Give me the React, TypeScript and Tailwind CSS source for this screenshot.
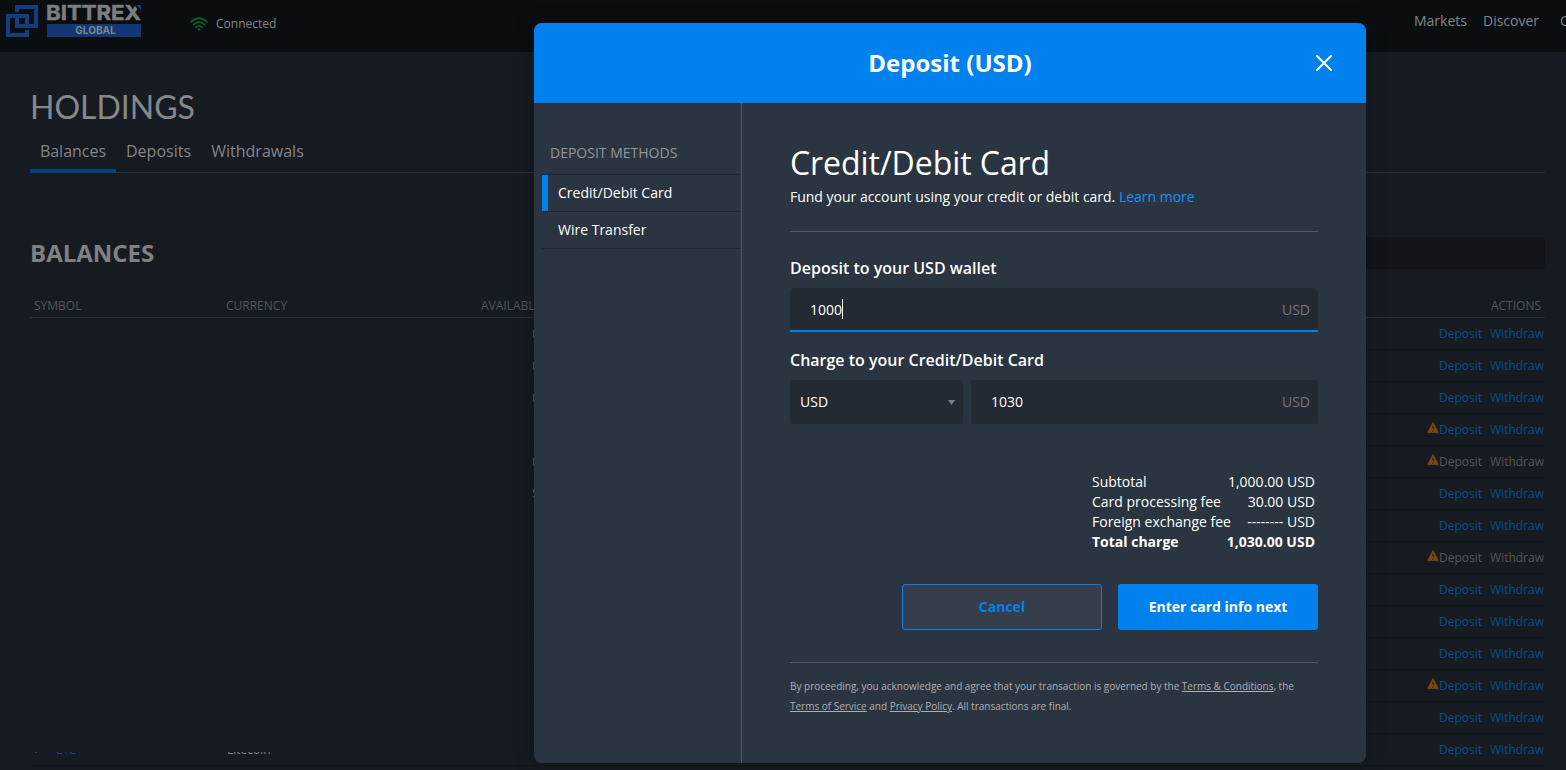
import React from 'react';

type BalanceRow = {
  symbol: string;
  currency: string;
  available: string;
  warning?: boolean;
  disabled?: boolean;
};

const rows: BalanceRow[] = [
  { symbol: '', currency: '', available: '0.00' },
  { symbol: '', currency: '', available: '0.00' },
  { symbol: '', currency: '', available: '0.00' },
  { symbol: '', currency: '', available: '', warning: true },
  { symbol: '', currency: '', available: '0.00', warning: true, disabled: true },
  { symbol: '', currency: '', available: '$0.00' },
  { symbol: '', currency: '', available: '' },
  { symbol: '', currency: '', available: '', warning: true, disabled: true },
  { symbol: '', currency: '', available: '' },
  { symbol: '', currency: '', available: '' },
  { symbol: '', currency: '', available: '' },
  { symbol: '', currency: '', available: '', warning: true },
  { symbol: '', currency: '', available: '' },
  { symbol: 'LTC', currency: 'Litecoin', available: '' },
];

const charges = [
  { label: 'Subtotal', value: '1,000.00 USD' },
  { label: 'Card processing fee', value: '30.00 USD' },
  { label: 'Foreign exchange fee', value: '-------- USD' },
];

const Logo: React.FC = () => (
  <div className="flex gap-[9px]">
    <svg width="32" height="32" viewBox="0 0 32 32" className="mt-[5px]" fill="none" stroke="#123d80" strokeWidth="4">
      <path d="M11 7V2H30V21H11V9" />
      <path d="M21 25V30H2V11H21V23" />
      <path d="M18 30H23" />
    </svg>
    <div className="w-[94px] pt-[5px]">
      <svg width="94" height="15" viewBox="0 0 94 15" className="block overflow-visible">
        <text x="-1" y="14.8" fill="#7d7e7f" stroke="#7d7e7f" strokeWidth="0.5" fontSize="20.5" fontWeight="700" fontFamily="Inter, sans-serif" textLength="95" lengthAdjust="spacingAndGlyphs">BITTREX</text>
        <path d="M87-1H95V7H92Z" fill="#0a0e11" />
        <path d="M89 0H94V5Z" fill="#123d80" />
      </svg>
      <div className="mt-1 h-[13px] bg-[#113775] pl-[3px] text-center font-[Inter,sans-serif] text-[10px] leading-[13px] font-bold text-[#808588]">GLOBAL</div>
    </div>
  </div>
);

const WifiIcon: React.FC = () => (
  <svg width="18" height="14" viewBox="0 0 18 14" fill="none" stroke="#07602f" strokeWidth="1.7" strokeLinecap="round">
    <path d="M1 5Q9-2.8 17 5M3.5 7.7Q9 2.6 14.5 7.7M6 10.2Q9 7.6 12 10.2" />
    <circle cx="9" cy="12.2" r="1.2" fill="#07602f" stroke="none" />
  </svg>
);

const WarningIcon: React.FC = () => (
  <svg width="12" height="11" viewBox="0 0 12 11" className="-mt-1">
    <path d="M6 .7 11.3 10.3H.7Z" fill="#7b4712" stroke="#7b4712" strokeLinejoin="round" />
    <path d="M6 3.7V7M6 8.2V9.4" stroke="#272017" strokeWidth="1.2" />
  </svg>
);

const Header: React.FC = () => (
  <header className="flex h-[52px] bg-[#0a0e11] pl-1.5 text-[#828587]">
    <Logo />
    <div className="ml-[49px] flex h-[47px] items-center gap-2 text-[12px]">
      <WifiIcon />
      <span>Connected</span>
    </div>
    <nav className="ml-auto flex h-[41px] w-[152px] shrink-0 items-center gap-4 overflow-hidden text-[14px] whitespace-nowrap">
      <span>Markets</span>
      <span>Discover</span>
      <span className="ml-[5px]">Orders</span>
    </nav>
  </header>
);

const Holdings: React.FC = () => (
  <main className="relative pr-[21px] pl-[30px]">
    <h1 className="pt-[34px] font-[Lato,sans-serif] text-[32px] leading-[42px] text-[#868889]">HOLDINGS</h1>
    <div className="mt-[5px] flex h-10 border-b border-[#2a2f36] text-[16px] leading-[36px] text-[#828587]">
      <div className="h-10 w-[86px] border-b-4 border-[#03427b] text-center">Balances</div>
      <div className="w-[85px] text-center">Deposits</div>
      <div className="w-[113px] text-center">Withdrawals</div>
    </div>

    <div className="mt-16 flex h-8 items-center justify-between">
      <h2 className="text-[24px] font-bold text-[#7f8081]">BALANCES</h2>
      <div className="h-8 w-[300px] rounded-sm bg-[#111519]" />
    </div>

    <div className="mt-6 flex h-[25px] items-center border-b border-[#2a2e34] pt-px text-[12px] text-[#52565a]">
      <div className="w-[196px] pl-1">SYMBOL</div>
      <div className="w-[255px]">CURRENCY</div>
      <div>AVAILABLE</div>
      <div className="ml-auto pr-1">ACTIONS</div>
    </div>
    {rows.map((row, i) => (
      <div key={i} className="flex h-8 items-center border-b border-[#111519] text-[12px] text-[#828587]">
        <div className="w-[197px] pl-[26px] text-[#0b4c8c]">{row.symbol}</div>
        <div className="w-[305px]">{row.currency}</div>
        <div className="text-[#716456]">{row.available}</div>
        <div className={`ml-auto flex items-center pr-px ${row.disabled ? 'text-[#54575b]' : 'text-[#0b4c8c]'}`}>
          {row.warning && <WarningIcon />}
          <span className="mr-2">Deposit</span>
          <span>Withdraw</span>
        </div>
      </div>
    ))}
    {/* hidden balances */}
    <div className="absolute top-[268px] left-0 h-[432px] w-[533px] bg-[#161b22]" />
    <div className="absolute top-[700px] left-[35px] h-px w-0.5 bg-[#3f4347]" />
  </main>
);

const DepositModal: React.FC = () => (
  <div className="absolute top-[23px] left-[534px] h-[740px] w-[832px] overflow-hidden rounded-lg bg-[#2b3541] text-[14px] text-white shadow-[0_2px_20px_rgba(0,0,0,0.25)]">
    <div className="flex h-20 items-center bg-[#0081ee]">
      <div className="w-[832px] text-center text-[24px] font-bold">Deposit (USD)</div>
      <svg width="16" height="16" viewBox="0 0 16 16" className="mr-[34px] -ml-[50px] shrink-0" stroke="#fff" strokeWidth="2" strokeLinecap="round">
        <path d="M1 1 15 15M15 1 1 15" />
      </svg>
    </div>
    <div className="flex h-[660px]">
      <aside className="w-52 shrink-0 border-r border-[#515963] pt-10 pl-2">
        <div className="h-[31px] pl-2 leading-5 text-[#92969b]">DEPOSIT METHODS</div>
        <div className="h-[37px] border-t border-[#202731]">
          <div className="h-9 border-l-6 border-[#0081ee] pl-2.5 leading-9">Credit/Debit Card</div>
        </div>
        <div className="h-[38px] border-y border-[#202731] pl-4 leading-9">Wire Transfer</div>
      </aside>

      <section className="w-[624px] px-12 pt-10">
        <h2 className="text-[32px] leading-10 tracking-[-0.06px]">Credit/Debit Card</h2>
        <p className="mt-1 leading-5 tracking-[-0.01px]">
          Fund your account using your credit or debit card. <a className="text-[#1691fa]">Learn more</a>
        </p>
        <div className="mt-6 border-t border-[#515963]" />

        <label className="mt-6 block text-[16px] leading-6 font-semibold">Deposit to your USD wallet</label>
        <div className="mt-2 flex h-11 items-center rounded-t-sm border-b-2 border-[#0081ee] bg-[#242a34] pr-2 pl-5">
          <span>1000</span>
          <span className="h-5 w-px bg-white" />
          <span className="ml-auto text-[#72767c]">USD</span>
        </div>

        <label className="mt-4 block text-[16px] leading-6 font-semibold">Charge to your Credit/Debit Card</label>
        <div className="mt-2 flex gap-2">
          <div className="flex h-11 w-[173px] items-center justify-between rounded-[3px] bg-[#242a34] pr-2 pl-2.5">
            <span className="pb-0.5">USD</span>
            <svg width="7" height="5" viewBox="0 0 7 5">
              <path d="M0 0H7L3.5 5Z" fill="#7d8084" />
            </svg>
          </div>
          <div className="flex h-11 flex-1 items-center justify-between rounded-[3px] bg-[#242a34] pr-2 pb-0.5 pl-5">
            <span>1030</span>
            <span className="text-[#72767c]">USD</span>
          </div>
        </div>

        <div className="mt-12 ml-auto w-[226px] pr-[3px] leading-5">
          {charges.map((item) => (
            <div key={item.label} className="flex justify-between whitespace-nowrap">
              <span>{item.label}</span>
              <span>{item.value}</span>
            </div>
          ))}
          <div className="flex justify-between font-bold whitespace-nowrap">
            <span>Total charge</span>
            <span>1,030.00 USD</span>
          </div>
        </div>

        <div className="mt-8 flex justify-end gap-4 font-bold">
          <button className="h-[46px] w-[200px] rounded-[3px] border border-[#0081ee] bg-[#373e4b] pb-0.5 text-[#0081ee]">Cancel</button>
          <button className="h-[46px] w-[200px] rounded-[3px] bg-[#0081ee] pb-0.5">Enter card info next</button>
        </div>

        <div className="mt-8 border-t border-[#515963] pt-[13px] text-[10px] leading-5 tracking-[-0.012px] text-[#abaeb3]">
          By proceeding, you acknowledge and agree that your transaction is governed by the <a className="underline">Terms &amp; Conditions</a>, the
          <br />
          <a className="underline">Terms of Service</a> and <a className="underline">Privacy Policy</a>. All transactions are final.
        </div>
      </section>
    </div>
  </div>
);

const App: React.FC = () => {
  return (
    <div className="relative h-[770px] w-[1566px] overflow-hidden bg-[#161b22] font-['Open_Sans',sans-serif]">
      <Header />
      <Holdings />
      <DepositModal />
    </div>
  );
};

export default App;
